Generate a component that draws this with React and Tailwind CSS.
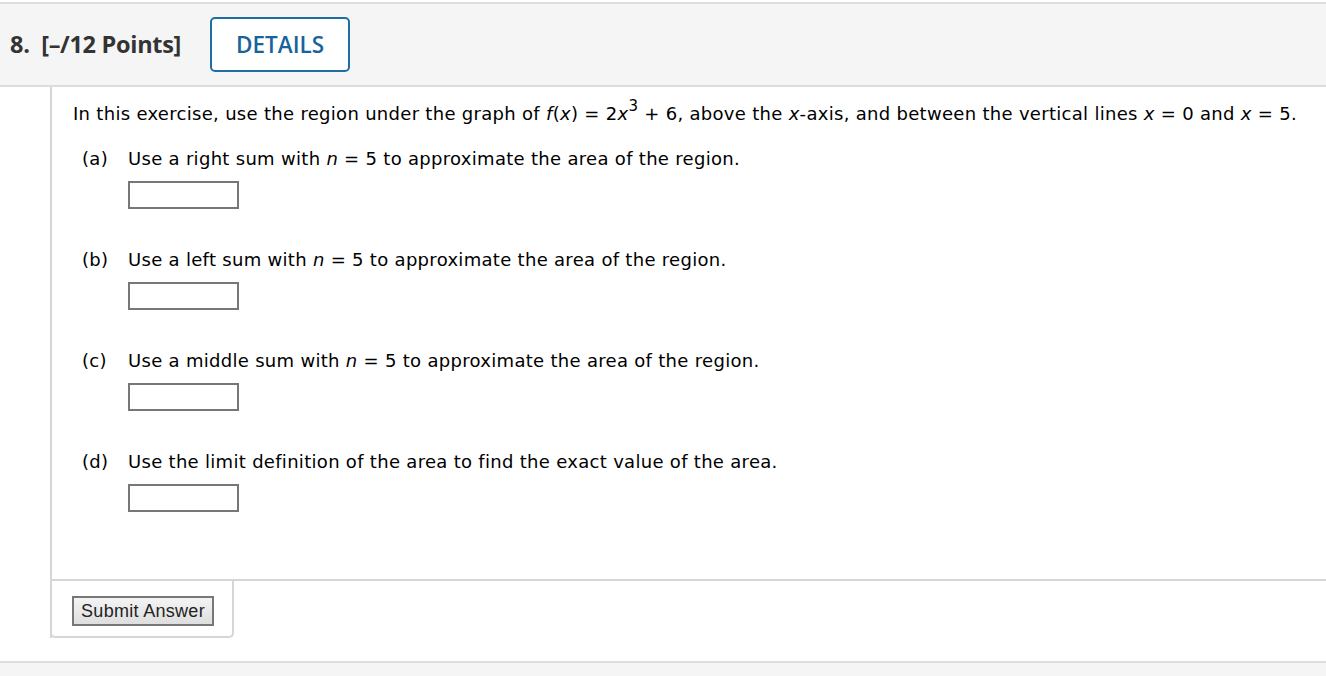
export default function App() {
  const parts = [
    { label: "(a)", text: <>Use a right sum with <i>n</i> = 5 to approximate the area of the region.</> },
    { label: "(b)", text: <>Use a left sum with <i>n</i> = 5 to approximate the area of the region.</> },
    { label: "(c)", text: <>Use a middle sum with <i>n</i> = 5 to approximate the area of the region.</> },
    { label: "(d)", text: <>Use the limit definition of the area to find the exact value of the area.</> },
  ];

  return (
    <div className="w-[1326px] h-[676px] bg-white overflow-hidden">
      <div className="h-[2px]" />
      <div className="h-[85px] bg-[#f5f5f5] border-t-2 border-b-2 border-[#dddddd] flex items-center pl-[10px] font-['Open_Sans',sans-serif]">
        <span className="text-[23.5px] font-bold text-[#333333] tracking-[-0.3px]">8.&nbsp; [–/12 Points]</span>
        <button className="ml-[29px] w-[140px] h-[55px] border-2 border-[#1f6ea3] rounded-[5px] bg-white text-[#19639a] text-[22.5px] font-semibold">
          DETAILS
        </button>
      </div>

      <div className="ml-[50px] border-l-2 border-[#d6d6d6] font-['DejaVu_Sans',Verdana,sans-serif] text-[18px] tracking-[0.3px] text-black">
        <div className="pt-[14px] pl-[21px] pb-[67px]">
          <p className="leading-[26px] whitespace-nowrap">
            In this exercise, use the region under the graph of <i>f</i>(<i>x</i>) = 2<i>x</i>
            <sup className="text-[15px] relative -top-[9px]">3</sup> + 6, above the <i>x</i>-axis, and between the vertical lines <i>x</i> = 0 and <i>x</i> = 5.
          </p>
          <div className="mt-[21px] flex flex-col gap-[40px]">
            {parts.map((p) => (
              <div key={p.label} className="flex">
                <span className="w-[55px] pl-[9px] leading-[22px]">{p.label}</span>
                <div>
                  <div className="leading-[22px]">{p.text}</div>
                  <div className="mt-[11px] w-[111px] h-[28px] border-2 border-[#777777]" />
                </div>
              </div>
            ))}
          </div>
        </div>
        <div className="border-t-2 border-[#d6d6d6]">
          <div className="w-[184px] h-[57px] -ml-[2px] border-l-2 border-r-2 border-b-2 border-[#d6d6d6] rounded-b-[5px] pt-[15px] pl-[20px]">
            <button className="w-[142px] h-[30px] border-2 border-[#777777] bg-gradient-to-b from-[#f4f4f4] to-[#dedede] text-[18px] text-[#222222] font-['Liberation_Sans',Arial,sans-serif] leading-none">
              Submit Answer
            </button>
          </div>
        </div>
      </div>

      <div className="mt-[23px] h-[30px] bg-[#f5f5f5] border-t-2 border-[#dddddd]" />
    </div>
  );
}
